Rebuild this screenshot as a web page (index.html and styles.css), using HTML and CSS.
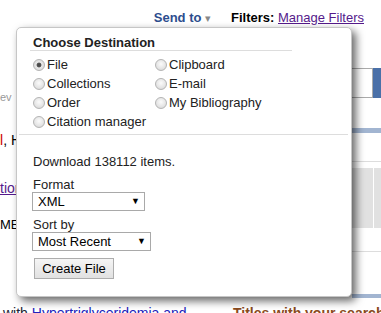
FILE: index.html
```html
<!DOCTYPE html>
<html lang="en">
<head>
    <meta charset="UTF-8">
    <meta name="viewport" content="width=device-width, initial-scale=1.0">
    <title>Send to - File</title>
    <link rel="stylesheet" href="styles.css">
</head>
<body>
    <div class="topbar">
        <span class="send-to">Send to <span class="caret">&#9662;</span></span>
        <span class="filters"><b>Filters:</b> <a href="#">Manage Filters</a></span>
    </div>

    <div class="results">
        <div class="main-col">
            <div class="frag frag-ev">ev</div>
            <div class="frag frag-auth"><span class="hit">l</span>, H</div>
            <div class="frag frag-link"><a href="#">tion</a></div>
            <div class="frag frag-me">ME</div>
        </div>
        <div class="side-col">
            <div class="search-box">
                <div class="search-input"></div>
                <div class="search-btn"></div>
            </div>
            <div class="side-bar"></div>
            <div class="side-rule"></div>
            <div class="side-panel"><div class="side-panel-split"></div></div>
            <div class="side-rule side-rule-low"></div>
            <div class="side-bar side-bar-low"></div>
        </div>
    </div>

    <div class="bottom-row">
        <span class="related"><span class="dark">with</span> <a href="#">Hypertriglyceridemia and</a></span>
        <span class="titles">Titles with your search</span>
    </div>

    <div class="dest-popup">
        <h2 class="dest-title">Choose Destination</h2>
        <div class="dest-body">
            <div class="dest-options">
                <label class="opt"><input type="radio" name="dest" checked> File</label>
                <label class="opt"><input type="radio" name="dest"> Clipboard</label>
                <label class="opt"><input type="radio" name="dest"> Collections</label>
                <label class="opt"><input type="radio" name="dest"> E-mail</label>
                <label class="opt"><input type="radio" name="dest"> Order</label>
                <label class="opt"><input type="radio" name="dest"> My Bibliography</label>
                <label class="opt opt-wide"><input type="radio" name="dest"> Citation manager</label>
            </div>
        </div>
        <hr class="dest-sep">
        <div class="dest-body">
            <p class="count">Download 138112 items.</p>
            <div class="field">
                <label for="fileFormat">Format</label>
                <div class="select-wrap select-format">
                    <select id="fileFormat">
                        <option>XML</option>
                        <option>Summary (text)</option>
                        <option>Abstract (text)</option>
                        <option>MEDLINE</option>
                        <option>CSV</option>
                    </select>
                </div>
            </div>
            <div class="field field-sort">
                <label for="sortBy">Sort by</label>
                <div class="select-wrap select-sort">
                    <select id="sortBy">
                        <option>Most Recent</option>
                        <option>Best Match</option>
                        <option>Author</option>
                    </select>
                </div>
            </div>
            <button type="button" class="create-btn">Create File</button>
        </div>
    </div>
</body>
</html>
```

FILE: styles.css
```css
body {
    margin: 0;
    width: 381px;
    height: 313px;
    overflow: hidden;
    position: relative;
    font-family: "Liberation Sans", Arial, sans-serif;
    font-size: 13px;
    color: #000;
    background: #fff;
}
a {
    color: #551a8b;
}

/* page behind the popup */
.topbar {
    height: 30px;
    box-sizing: border-box;
    padding: 10px 17px 0 0;
    display: flex;
    justify-content: flex-end;
    line-height: 15px;
}
.send-to {
    font-weight: bold;
    color: #2d4d8e;
    margin-right: 20px;
}
.caret {
    color: #888;
    font-weight: normal;
    font-size: 11px;
}
.results {
    display: flex;
    height: 275px;
}
.main-col {
    width: 352px;
}
.frag {
    line-height: 16px;
    white-space: nowrap;
}
.frag-ev {
    margin-top: 59px;
    font-size: 11px;
    color: #999;
}
.frag-auth {
    margin-top: 27px;
    font-size: 14px;
}
.hit {
    color: #c00;
}
.frag-link {
    margin-top: 32px;
    font-size: 14px;
}
.frag-me {
    margin-top: 21px;
}
.side-col {
    flex: 1;
}
.search-box {
    display: flex;
    margin-top: 38px;
    height: 30px;
}
.search-input {
    width: 20px;
    border: 1px solid #aaa;
    border-left: none;
}
.search-btn {
    flex: 1;
    background: #4a70a8;
}
.side-bar {
    margin-top: 30px;
    height: 5px;
    background: #a2b5d1;
}
.side-rule {
    margin-top: 28px;
    border-top: 1px solid #ddd;
}
.side-panel {
    margin-top: 6px;
    height: 60px;
    background: #e1e1e1;
}
.side-panel-split {
    margin-left: 21px;
    width: 1px;
    height: 100%;
    background: #fff;
}
.side-rule-low {
    margin-top: 23px;
}
.side-bar-low {
    margin-top: 42px;
    height: 4px;
}
.bottom-row {
    display: flex;
    font-size: 14px;
    line-height: 16px;
    white-space: nowrap;
}
.related {
    flex-shrink: 0;
    width: 233px;
    padding-left: 3px;
    box-sizing: border-box;
}
.related a {
    color: #2222bb;
}
.dark {
    color: #223;
}
.titles {
    font-weight: bold;
    color: #8a4a1c;
}

/* destination popup */
.dest-popup {
    position: absolute;
    left: 16px;
    top: 27px;
    width: 336px;
    height: 270px;
    box-sizing: border-box;
    padding: 7px 13px 0 13px;
    background: #fff;
    border: 1px solid #c6c6c6;
    border-radius: 5px;
    box-shadow: 4px 4px 9px rgba(0, 0, 0, 0.6);
}
.dest-title {
    margin: 0;
    width: 259px;
    padding: 0 0 0 3px;
    font-size: 13px;
    line-height: 15px;
    font-weight: bold;
    color: #222;
    border-bottom: 1px solid #ddd;
}
.dest-body {
    padding-left: 3px;
}
.dest-options {
    display: grid;
    grid-template-columns: 122px 122px;
    grid-auto-rows: 19px;
    margin-top: 4px;
}
.opt {
    display: flex;
    align-items: center;
    color: #222;
    white-space: nowrap;
}
.opt-wide {
    grid-column: span 2;
}
.opt input {
    appearance: none;
    -webkit-appearance: none;
    width: 12px;
    height: 12px;
    margin: 0 2px 0 0;
    border: 1px solid #b4b4b4;
    border-radius: 50%;
    background: radial-gradient(circle at 50% 40%, #fbfbfb 0, #e4e4e4 60%, #d0d0d0 100%);
    box-sizing: border-box;
}
.opt input:checked {
    background: radial-gradient(circle, #444 0, #555 2px, #e8e8e8 2.8px, #d4d4d4 100%);
}
.dest-sep {
    margin: 3px -10px 0 -11px;
    border: none;
    border-top: 1px solid #ddd;
    height: 0;
}
.count {
    margin: 19px 0 0 0;
    line-height: 15px;
    color: #222;
}
.field {
    margin-top: 8px;
}
.field-sort {
    margin-top: 6px;
}
.field label {
    display: block;
    line-height: 15px;
    color: #222;
}
.select-wrap {
    position: relative;
    margin-left: -1px;
}
.select-wrap select {
    appearance: none;
    -webkit-appearance: none;
    display: block;
    height: 19px;
    padding: 0 0 0 5px;
    border: 1px solid #a9a9a9;
    border-radius: 0;
    background: #fff;
    font-family: "Liberation Sans", Arial, sans-serif;
    font-size: 13px;
    color: #000;
}
.select-wrap::after {
    content: "\25BC";
    position: absolute;
    top: 3px;
    font-size: 9px;
    line-height: 12px;
    color: #000;
    pointer-events: none;
}
.select-format select {
    width: 113px;
}
.select-format::after {
    left: 99px;
}
.select-sort select {
    width: 119px;
}
.select-sort::after {
    left: 105px;
}
.create-btn {
    margin: 7px 0 0 1px;
    width: 80px;
    height: 21px;
    padding: 0;
    border: 1px solid #adadad;
    border-radius: 0;
    background: linear-gradient(#f5f5f5, #e1e1e1);
    font-family: "Liberation Sans", Arial, sans-serif;
    font-size: 13px;
    color: #000;
}
```
